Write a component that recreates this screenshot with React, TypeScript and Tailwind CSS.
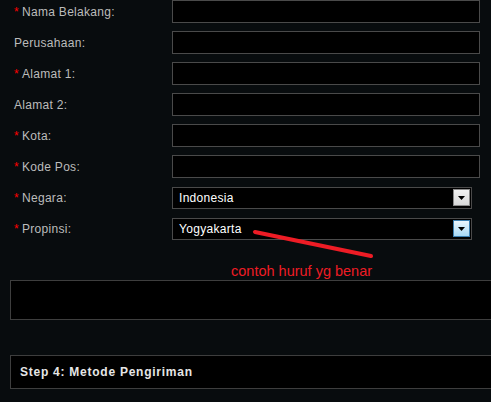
import React from "react";

const rows: { label: string; req: boolean }[] = [
  { label: "Nama Belakang:", req: true },
  { label: "Perusahaan:", req: false },
  { label: "Alamat 1:", req: true },
  { label: "Alamat 2:", req: false },
  { label: "Kota:", req: true },
  { label: "Kode Pos:", req: true },
];

function Label({ label, req }: { label: string; req: boolean }) {
  return (
    <div className="w-[172px] shrink-0 pl-[14px] text-[12px] text-[#bcbcbc] leading-none tracking-[0.3px]">
      {req && <span className="text-[#ff0000] mr-[3px]">*</span>}
      {label}
    </div>
  );
}

function Select({ value, active }: { value: string; active?: boolean }) {
  return (
    <div className="w-[300px] shrink-0 h-[22px] border border-[#4a4a4a] bg-black flex items-center justify-between pl-[6px] pr-[1px]">
      <span className="text-[12px] text-white tracking-[0.3px] leading-none">{value}</span>
      <div
        className={
          active
            ? "w-[17px] h-[17px] border border-[#3c7fb1] bg-gradient-to-b from-[#eaf6fd] to-[#a7d9f5] flex items-center justify-center"
            : "w-[17px] h-[17px] border border-[#8a8a8a] bg-gradient-to-b from-[#f2f2f2] to-[#d8d8d8] flex items-center justify-center"
        }
      >
        <svg width="7" height="4" viewBox="0 0 7 4">
          <path d="M0 0H7L3.5 4Z" fill="#000" />
        </svg>
      </div>
    </div>
  );
}

export default function App() {
  return (
    <div
      className="relative w-[491px] h-[402px] bg-[#080c0e] overflow-hidden"
      style={{ fontFamily: '"Liberation Sans", Arial, sans-serif' }}
    >
      <div className="flex flex-col gap-[8px] pt-0">
        {rows.map((r) => (
          <div key={r.label} className="flex items-center h-[23px]">
            <Label label={r.label} req={r.req} />
            <div className="w-[308px] shrink-0 h-[23px] border border-[#4a4a4a] bg-black" />
          </div>
        ))}
        <div className="flex items-center h-[23px]">
          <Label label="Negara:" req />
          <Select value="Indonesia" />
        </div>
        <div className="flex items-center h-[23px]">
          <Label label="Propinsi:" req />
          <Select value="Yogyakarta" active />
        </div>
      </div>

      <div className="ml-[10px] mt-[40px] w-[500px] h-[40px] border border-[#3e3e3e] bg-black" />

      <div className="ml-[10px] mt-[35px] w-[500px] h-[34px] border border-[#3e3e3e] bg-black flex items-center pl-[9px]">
        <span className="text-[12px] font-bold text-[#e6e6e6] tracking-[0.75px]">Step 4: Metode Pengiriman</span>
      </div>

      <svg className="absolute left-0 top-0 pointer-events-none" width="491" height="402">
        <line x1="255" y1="232" x2="371" y2="256" stroke="#ee1c25" strokeWidth="4" strokeLinecap="round" />
      </svg>
      <div className="absolute left-[231px] top-[262px] text-[14.5px] leading-[18px] text-[#ee1c25]">
        contoh huruf yg benar
      </div>
    </div>
  );
}
